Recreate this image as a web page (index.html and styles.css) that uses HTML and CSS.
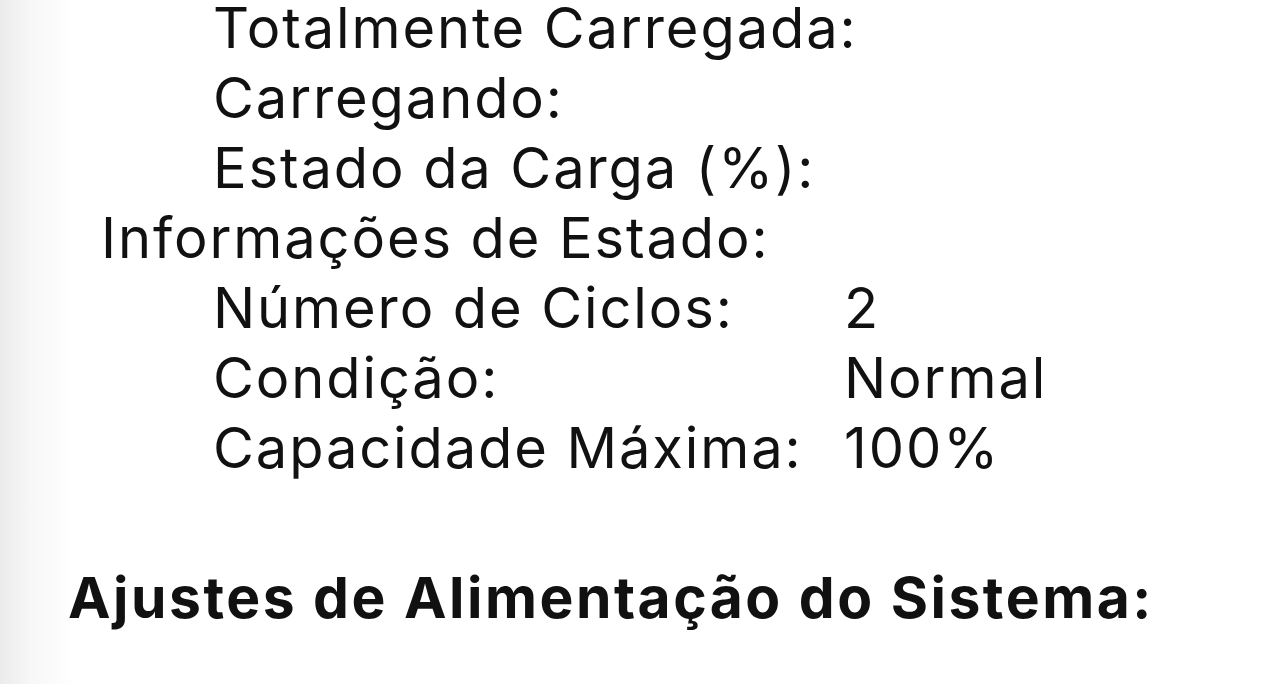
FILE: index.html
```html
<!DOCTYPE html>
<html lang="pt-BR">
<head>
  <meta charset="UTF-8">
  <title>Informações do Sistema</title>
  <link rel="stylesheet" href="styles.css">
</head>
<body>

  <div class="report">
    <div class="group">
      <div class="row">
        <span class="label">Totalmente Carregada:</span>
        <span class="value"></span>
      </div>
      <div class="row">
        <span class="label">Carregando:</span>
        <span class="value"></span>
      </div>
      <div class="row">
        <span class="label">Estado da Carga (%):</span>
        <span class="value"></span>
      </div>
    </div>

    <div class="section-title">Informações de Estado:</div>
    <div class="group">
      <div class="row">
        <span class="label">Número de Ciclos:</span>
        <span class="value">2</span>
      </div>
      <div class="row">
        <span class="label">Condição:</span>
        <span class="value">Normal</span>
      </div>
      <div class="row">
        <span class="label">Capacidade Máxima:</span>
        <span class="value">100%</span>
      </div>
    </div>

    <h3>Ajustes de Alimentação do Sistema:</h3>
  </div>

</body>
</html>
```

FILE: styles.css
```css
body {
  margin: 0;
  height: 684px;
  overflow: hidden;
  background: linear-gradient(to right, #ebebeb 0px, #f7f7f7 30px, #fff 75px);
  color: #111;
  font-family: Inter, "Noto Sans", sans-serif;
}

.report {
  margin-top: -7px;
  padding-left: 101px;
  font-size: 56px;
  line-height: 70px;
  letter-spacing: 1.9px;
}

.report .group {
  padding-left: 112px;
}

.row {
  display: grid;
  grid-template-columns: 631px auto;
  height: 70px;
}

.label {
  white-space: nowrap;
}

.section-title {
  height: 70px;
  white-space: nowrap;
}

h3 {
  margin: 80px 0 0 -33px;
  font-size: 57px;
  font-weight: 700;
  line-height: 70px;
  letter-spacing: 2.5px;
  white-space: nowrap;
}
```
